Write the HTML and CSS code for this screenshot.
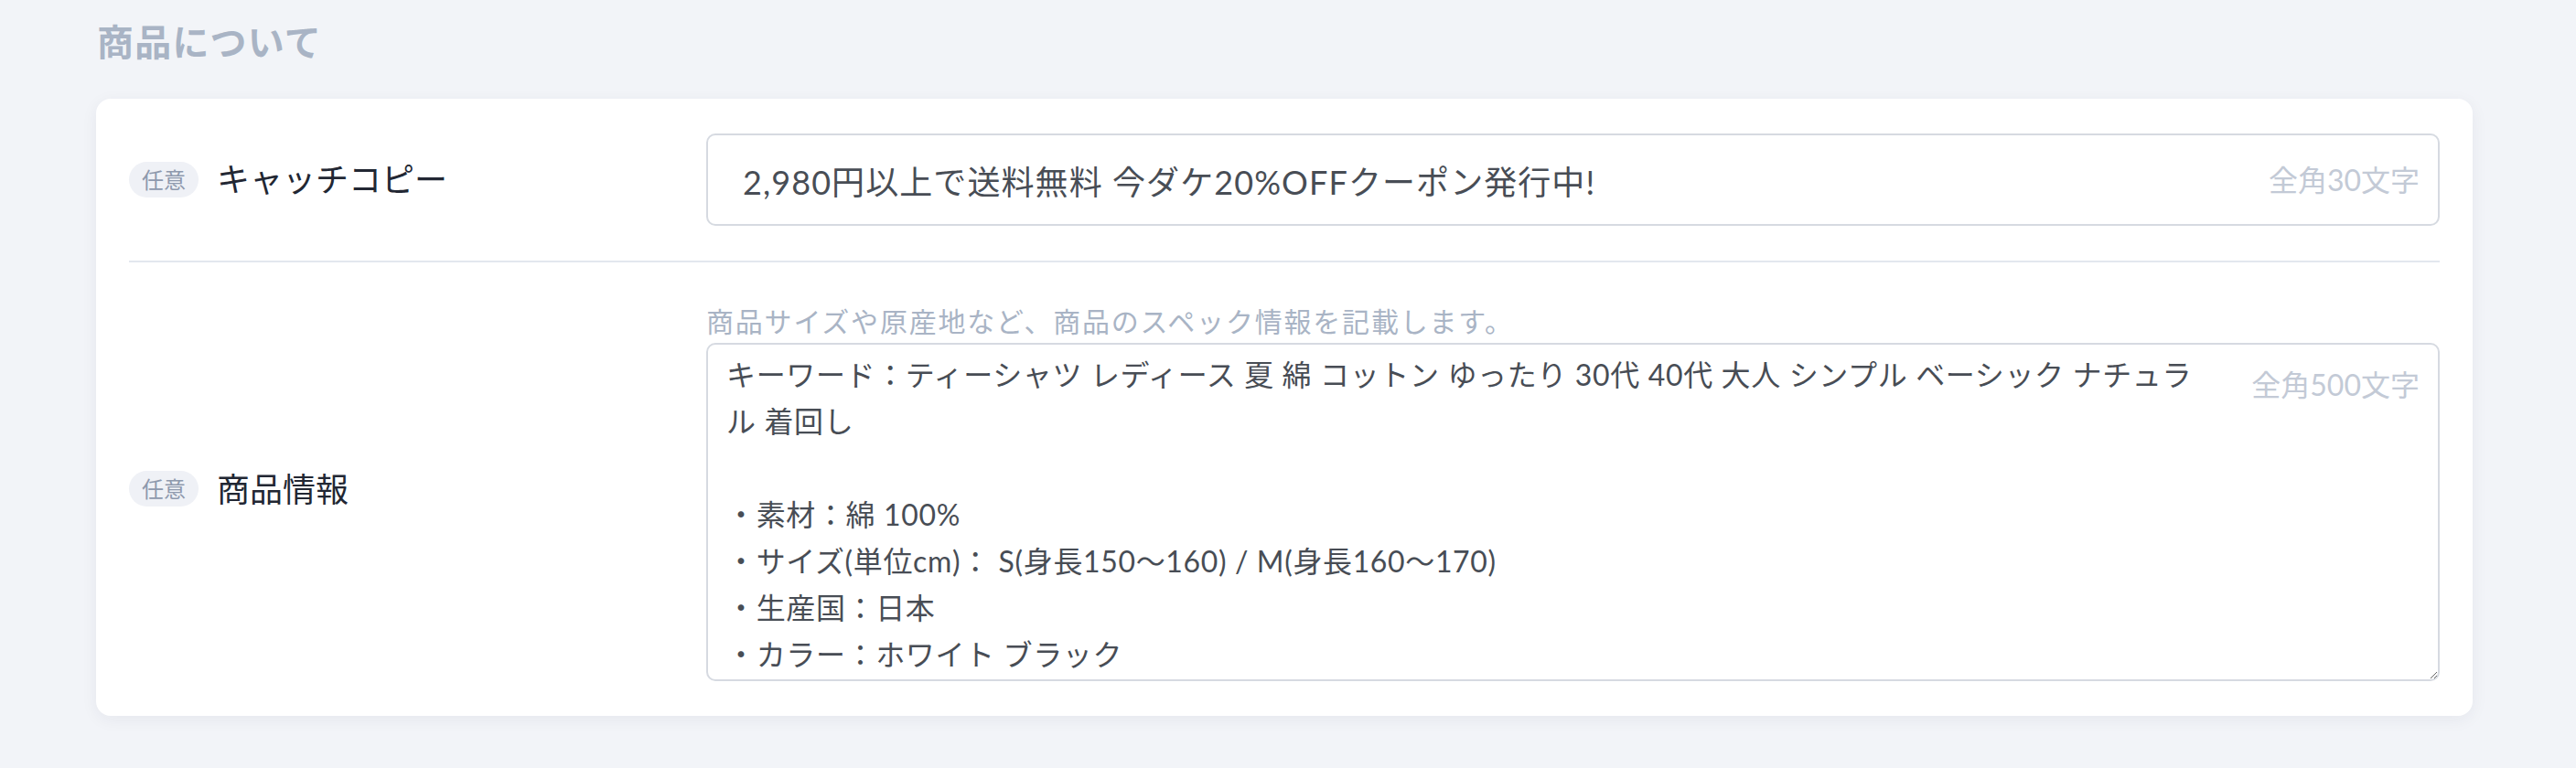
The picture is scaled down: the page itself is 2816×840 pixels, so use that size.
FILE: index.html
```html
<!DOCTYPE html>
<html lang="ja">
<head>
  <meta charset="UTF-8" />
  <meta name="viewport" content="width=device-width, initial-scale=1.0" />
  <title>商品について</title>
  <link rel="stylesheet" href="styles.css">
</head>
<body>
  <main class="page">
    <h2 class="section-title">商品について</h2>

    <section class="card">
      <div class="field-row">
        <div class="field-label">
          <span class="badge">任意</span>
          <span class="label-text">キャッチコピー</span>
        </div>
        <div class="field-body">
          <div class="input-wrap">
            <input class="text-input" type="text" value="2,980円以上で送料無料 今ダケ20%OFFクーポン発行中!">
            <span class="counter counter-middle">全角30文字</span>
          </div>
        </div>
      </div>

      <div class="field-row">
        <div class="field-label">
          <span class="badge">任意</span>
          <span class="label-text">商品情報</span>
        </div>
        <div class="field-body">
          <p class="help">商品サイズや原産地など、商品のスペック情報を記載します。</p>
          <div class="input-wrap">
            <textarea class="text-area">キーワード：ティーシャツ レディース 夏 綿 コットン ゆったり 30代 40代 大人 シンプル ベーシック ナチュラル 着回し

・素材：綿 100%
・サイズ(単位cm)： S(身長150〜160) / M(身長160〜170)
・生産国：日本
・カラー：ホワイト ブラック</textarea>
            <span class="counter counter-top">全角500文字</span>
          </div>
        </div>
      </div>
    </section>
  </main>
</body>
</html>
```

FILE: styles.css
```css
* {
  box-sizing: border-box;
}

body {
  margin: 0;
  background-color: #f2f4f8;
  font-family: Lato, "Noto Sans CJK JP", sans-serif;
  color: #222733;
}

.page {
  padding: 18px 113px 40px 105px;
}

.section-title {
  margin: 0 0 34px;
  padding-left: 1px;
  font-size: 40px;
  line-height: 56px;
  font-weight: 700;
  letter-spacing: 0.03em;
  color: #a9b4c5;
}

.card {
  background: #ffffff;
  border-radius: 16px;
  padding: 0 36px;
  box-shadow: 0 4px 18px rgba(30, 40, 70, 0.06);
}

.field-row {
  display: grid;
  grid-template-columns: 631px 1fr;
  align-items: center;
  padding: 38px 0;
}

.field-row + .field-row {
  border-top: 2px solid #e3e7ee;
}

.field-label {
  display: flex;
  align-items: center;
  gap: 20px;
}

.badge {
  display: inline-block;
  height: 39px;
  line-height: 39px;
  padding: 0 14px;
  border-radius: 20px;
  background: #eff1f6;
  color: #8e99ad;
  font-size: 24px;
}

.label-text {
  font-size: 36px;
  line-height: 1.4;
  color: #222733;
}

.help {
  margin: 4px 0 1px;
  font-size: 30px;
  line-height: 45px;
  letter-spacing: 0.06em;
  color: #a9b4c5;
}

.input-wrap {
  position: relative;
}

.text-input,
.text-area {
  display: block;
  width: 100%;
  border: 2px solid #d6dae1;
  border-radius: 10px;
  background: #ffffff;
  font-family: Lato, "Noto Sans CJK JP", sans-serif;
  color: #484d55;
  outline: none;
}

.text-input {
  height: 101px;
  padding: 0 240px 0 38px;
  font-size: 36px;
  letter-spacing: 0.03em;
}

.text-area {
  height: 370px;
  padding: 7px 255px 2px 20px;
  font-size: 32px;
  line-height: 51px;
  letter-spacing: 0.02em;
  resize: vertical;
  overflow: hidden;
}

.counter {
  position: absolute;
  font-size: 32px;
  line-height: 48px;
  color: #c3cad6;
  pointer-events: none;
}

.counter-middle {
  top: 50%;
  transform: translateY(-50%);
  right: 22px;
}

.counter-top {
  top: 22px;
  right: 22px;
}
```
